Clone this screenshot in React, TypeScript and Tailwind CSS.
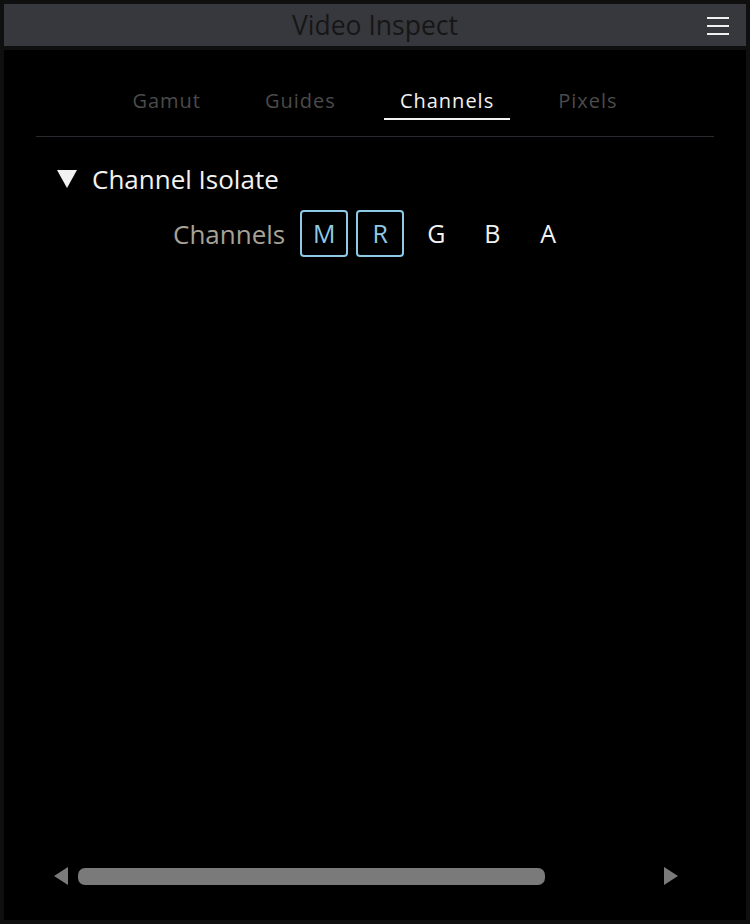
import React from "react";

export default function App() {
  const tabs = ["Gamut", "Guides", "Channels", "Pixels"];
  const font = { fontFamily: '"Open Sans", "Noto Sans", sans-serif' };
  return (
    <div className="w-[750px] h-[924px] bg-[#0f0f10] p-[4px] flex flex-col gap-[4px]" style={font}>
      <div className="h-[42px] shrink-0 bg-[#37383d] relative flex items-center justify-center">
        <span className="text-[26.5px] text-[#161616] leading-none">Video Inspect</span>
        <div className="absolute right-[17px] top-[13px] flex flex-col gap-[6px]">
          <div className="w-[22px] h-[2px] bg-[#f0f0f0]" />
          <div className="w-[22px] h-[2px] bg-[#f0f0f0]" />
          <div className="w-[22px] h-[2px] bg-[#f0f0f0]" />
        </div>
      </div>
      <div className="flex-1 bg-black flex flex-col">
        <div className="mx-[32px] pt-[41px] pb-[16px] border-b border-[#2a2a30] flex justify-center gap-[32px]">
          {tabs.map((t) => (
            <div
              key={t}
              className={
                "px-[16px] h-[29px] flex items-start text-[20px] tracking-[1px] leading-none " +
                (t === "Channels"
                  ? "text-[#f2f2f2] border-b-2 border-[#f2f2f2]"
                  : "text-[#4b4b4b]")
              }
            >
              {t}
            </div>
          ))}
        </div>
        <div className="pl-[53px] pt-[29px] flex items-center gap-[15px]">
          <svg width="20" height="18" viewBox="0 0 20 18">
            <polygon points="0,0 20,0 10,18" fill="#f2f2f2" />
          </svg>
          <span className="text-[26px] text-[#f2f2f2] leading-none">Channel Isolate</span>
        </div>
        <div className="pl-[169px] pt-[18px] flex items-center">
          <span className="text-[26px] text-[#a8a296] leading-none mr-[15px]">Channels</span>
          <div className="flex gap-[8px]">
            {["M", "R", "G", "B", "A"].map((c, i) => (
              <div
                key={c}
                className={
                  "w-[48px] h-[47px] rounded-[4px] flex items-center justify-center text-[25px] leading-none " +
                  (i < 2
                    ? "border-2 border-[#8ecae6] text-[#8ecae6]"
                    : "border-2 border-transparent text-[#f2f2f2]")
                }
              >
                {c}
              </div>
            ))}
          </div>
        </div>
        <div className="flex-1" />
        <div className="h-[52px] flex items-start pl-[48px] gap-[8px]">
          <svg width="18" height="18" viewBox="0 0 18 18" className="mt-[-1px]">
            <polygon points="16,0 16,18 2,9" fill="#7a7a7a" />
          </svg>
          <div className="w-[467px] h-[17px] rounded-[7px] bg-[#7a7a7a]" />
          <svg width="16" height="18" viewBox="0 0 16 18" className="ml-[111px] mt-[-1px]">
            <polygon points="0,0 0,18 14,9" fill="#7a7a7a" />
          </svg>
        </div>
      </div>
    </div>
  );
}
